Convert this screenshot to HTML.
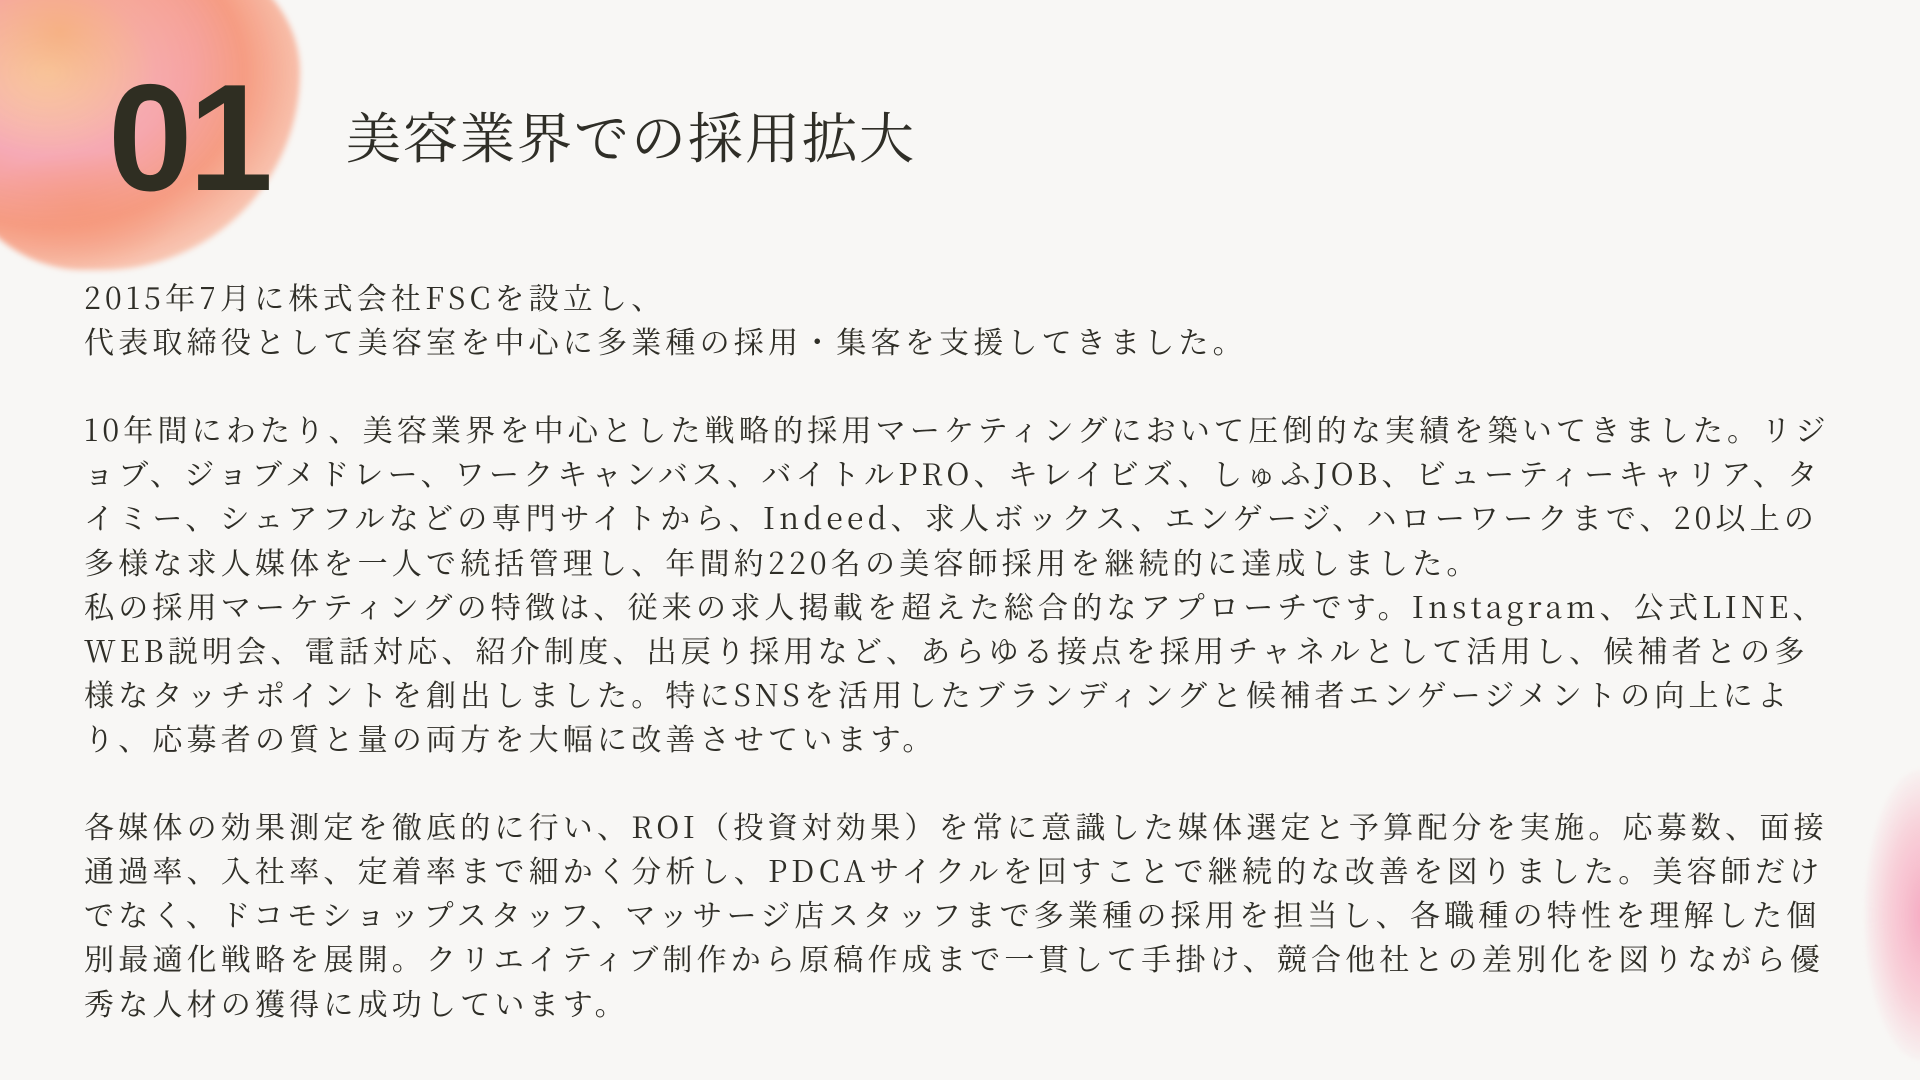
<!DOCTYPE html>
<html><head><meta charset="utf-8"><style>
html,body{margin:0;padding:0}
body{width:1920px;height:1080px;overflow:hidden;position:relative;background:#f8f7f5;font-family:"Noto Serif CJK JP","Liberation Serif",serif;color:#2f2e27}
.blob{position:absolute;left:-60px;top:-60px;width:360px;height:330px;border-radius:30% 45% 55% 40%/30% 40% 60% 50%;
background:radial-gradient(ellipse at 30% 40%,rgba(250,215,185,.95) 0%,rgba(245,160,175,.9) 30%,rgba(245,140,110,.85) 55%,rgba(248,170,140,.6) 75%,rgba(248,247,245,0) 100%);filter:blur(3px)}
.blob2{position:absolute;left:0;top:0;width:200px;height:160px;background:radial-gradient(ellipse at 30% 20%,rgba(245,170,110,.7),rgba(248,247,245,0) 70%)}
.blob3{position:absolute;left:-20px;top:150px;width:200px;height:120px;border-radius:50%;background:radial-gradient(ellipse,rgba(245,150,120,.6),rgba(248,247,245,0) 70%)}
.rb{position:absolute;left:1865px;top:770px;width:110px;height:290px;border-radius:50%;background:radial-gradient(ellipse at 55% 50%,rgba(245,150,180,.8) 0%,rgba(248,185,200,.6) 45%,rgba(248,247,245,0) 75%);filter:blur(2px)}
.num{position:absolute;left:108px;top:62px;font-family:"Liberation Sans",sans-serif;font-weight:bold;font-size:152px;line-height:152px;letter-spacing:-4px;color:#2f2e22}
.title{position:absolute;left:346px;top:103px;font-size:55px;line-height:64px;letter-spacing:2px;white-space:nowrap}
.body{position:absolute;left:84px;top:274px;font-size:30px;line-height:44.1px;letter-spacing:4.2px;white-space:nowrap}
</style></head><body>
<div class="blob"></div><div class="blob2"></div><div class="blob3"></div><div class="rb"></div>
<div class="num">01</div>
<div class="title">美容業界での採用拡大</div>
<div class="body">2015年7月に株式会社FSCを設立し、<br>代表取締役として美容室を中心に多業種の採用・集客を支援してきました。<br><br>10年間にわたり、美容業界を中心とした戦略的採用マーケティングにおいて圧倒的な実績を築いてきました。リジ<br>ョブ、ジョブメドレー、ワークキャンバス、バイトルPRO、キレイビズ、しゅふJOB、ビューティーキャリア、タ<br>イミー、シェアフルなどの専門サイトから、Indeed、求人ボックス、エンゲージ、ハローワークまで、20以上の<br>多様な求人媒体を一人で統括管理し、年間約220名の美容師採用を継続的に達成しました。<br>私の採用マーケティングの特徴は、従来の求人掲載を超えた総合的なアプローチです。Instagram、公式LINE、<br>WEB説明会、電話対応、紹介制度、出戻り採用など、あらゆる接点を採用チャネルとして活用し、候補者との多<br>様なタッチポイントを創出しました。特にSNSを活用したブランディングと候補者エンゲージメントの向上によ<br>り、応募者の質と量の両方を大幅に改善させています。<br><br>各媒体の効果測定を徹底的に行い、ROI（投資対効果）を常に意識した媒体選定と予算配分を実施。応募数、面接<br>通過率、入社率、定着率まで細かく分析し、PDCAサイクルを回すことで継続的な改善を図りました。美容師だけ<br>でなく、ドコモショップスタッフ、マッサージ店スタッフまで多業種の採用を担当し、各職種の特性を理解した個<br>別最適化戦略を展開。クリエイティブ制作から原稿作成まで一貫して手掛け、競合他社との差別化を図りながら優<br>秀な人材の獲得に成功しています。</div>
</body></html>
